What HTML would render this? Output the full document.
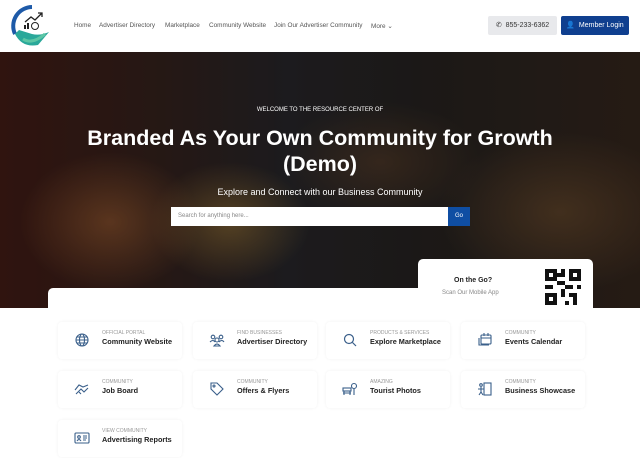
<!DOCTYPE html>
<html><head><meta charset="utf-8"><style>
*{box-sizing:border-box;margin:0;padding:0}
body{width:640px;height:458px;overflow:hidden;background:#fff;font-family:"Liberation Sans",sans-serif;position:relative}
.nav{position:absolute;top:0;left:0;width:640px;height:52px;background:#fff}
.nav a{position:absolute;top:22px;font-size:6.4px;color:#555;text-decoration:none;white-space:nowrap}
.phone{position:absolute;left:488px;top:16px;width:69px;height:19px;background:#e8e9ec;border-radius:2px;font-size:7px;color:#333;text-align:center;line-height:19px}
.login{position:absolute;left:561px;top:16px;width:68px;height:19px;background:#0f3f8f;border-radius:2px;font-size:7px;color:#fff;text-align:center;line-height:19px}
.hero{position:absolute;top:52px;left:0;width:640px;height:256px;overflow:hidden;
background:
radial-gradient(ellipse 90px 70px at 110px 170px,rgba(200,120,60,.55),transparent),
radial-gradient(ellipse 80px 60px at 230px 170px,rgba(210,160,70,.5),transparent),
radial-gradient(ellipse 120px 80px at 560px 160px,rgba(160,110,60,.45),transparent),
radial-gradient(ellipse 100px 60px at 380px 110px,rgba(140,90,50,.4),transparent),
linear-gradient(90deg,#4a1f18 0%,#3a2520 25%,#2b2a2e 45%,#2a2624 65%,#3a2a20 100%)}
.hero:after{content:"";position:absolute;inset:0;background:rgba(0,0,0,.35)}
.h{position:absolute;z-index:2;color:#fff;text-align:center;width:640px;left:0}
.search{position:absolute;z-index:2;left:171px;top:207px;width:277px;height:19px;background:#fff;font-size:6px;color:#888;line-height:19px;padding-left:7px}
.go{position:absolute;z-index:2;left:448px;top:207px;width:22px;height:19px;background:#0f4ea3;color:#fff;font-size:6px;text-align:center;line-height:19px}
.card{position:absolute;left:48px;top:288px;width:545px;height:170px;background:#fff;border-radius:5px}
.qr{position:absolute;z-index:3;left:418px;top:259px;width:175px;height:50px;background:#fff;border-radius:5px}
.tile{position:absolute;width:124px;height:37px;background:#fff;border-radius:4px;box-shadow:0 0 3px rgba(0,0,0,.06)}
.tile svg{position:absolute;left:16px;top:10px}
.tile .s{position:absolute;left:44px;top:8px;font-size:5px;color:#999;text-transform:uppercase}
.tile .t{position:absolute;left:44px;top:15px;font-size:7.3px;color:#222;font-weight:bold;white-space:nowrap}
</style></head><body>
<div class="nav">
<svg style="position:absolute;left:10px;top:4px" width="42" height="44" viewBox="0 0 42 44">
<path d="M22 3A19 19 0 0 0 5 30" stroke="#1e5aa8" stroke-width="4" fill="none"/>
<path d="M5 30Q12 44 28 41L39 28Q30 32 22 30L9 26Z" fill="#2aa89a"/>
<path d="M13 35Q22 41 35 30" stroke="#5cc6a5" stroke-width="3" fill="none"/>
<path d="M15 18l6-5 4 3 7-7M28 9h4v4" stroke="#222" stroke-width="1.3" fill="none"/>
<rect x="14" y="21" width="2" height="4" fill="#222"/><rect x="17" y="19" width="2" height="6" fill="#222"/>
<circle cx="25" cy="22" r="3.5" stroke="#222" fill="none"/>
</svg>
<a style="left:74px">Home</a><a style="left:99px">Advertiser Directory</a><a style="left:165px">Marketplace</a><a style="left:209px">Community Website</a><a style="left:274px">Join Our Advertiser Community</a><a style="left:371px">More ⌄</a>
<div class="phone">✆&nbsp; 855-233-6362</div>
<div class="login">👤&nbsp; Member Login</div>
</div>
<div class="hero">
<div class="h" style="top:55px;font-size:6px">WELCOME TO THE RESOURCE CENTER OF</div>
<div class="h" style="top:73px;font-size:21.5px;font-weight:bold;line-height:26px">Branded As Your Own Community for Growth<br>(Demo)</div>
<div class="h" style="top:135px;font-size:9px">Explore and Connect with our Business Community</div>
</div>
<div class="search">Search for anything here...</div><div class="go">Go</div>
<div class="card"></div>
<div class="qr">
<div style="position:absolute;left:36px;top:18px;font-size:7px;font-weight:bold;color:#222">On the Go?</div>
<div style="position:absolute;left:24px;top:31px;font-size:6px;color:#888">Scan Our Mobile App</div>
<svg style="position:absolute;left:127px;top:10px" width="36" height="36" viewBox="0 0 9 9" shape-rendering="crispEdges">
<path d="M0 0h3v3H0zM6 0h3v3H6zM0 6h3v3H0z" fill="#111"/><path d="M1 1h1v1H1zM7 1h1v1H7zM1 7h1v1H1z" fill="#fff"/>
<path d="M4 0h1v2H4zM3 3h2v1H3zM5 4h2v1H5zM4 5h1v2H4zM6 6h2v1H6zM7 7h1v2H7zM5 8h1v1H5zM0 4h2v1H0zM8 4h1v1H8zM3 1h1v1H3z" fill="#111"/>
</svg>
</div>
<div class="tile" style="left:58px;top:322px"><svg width="16" height="16" viewBox="0 0 16 16" fill="none" stroke="#3a5f8a" stroke-width="1.1"><circle cx="8" cy="8" r="6"/><ellipse cx="8" cy="8" rx="2.5" ry="6"/><path d="M2 8h12M3 5h10M3 11h10"/></svg><div class="s">Official Portal</div><div class="t">Community Website</div></div>
<div class="tile" style="left:193px;top:322px"><svg width="16" height="16" viewBox="0 0 16 16" fill="none" stroke="#3a5f8a" stroke-width="1.1"><circle cx="4" cy="5" r="1.8"/><circle cx="12" cy="5" r="1.8"/><circle cx="8" cy="8" r="2"/><path d="M1 10q3-3 5 0M10 10q3-3 5 0M5 14q3-4 6 0z"/></svg><div class="s">Find Businesses</div><div class="t">Advertiser Directory</div></div>
<div class="tile" style="left:326px;top:322px"><svg width="16" height="16" viewBox="0 0 16 16" fill="none" stroke="#3a5f8a" stroke-width="1.2"><circle cx="7" cy="7" r="4.5"/><path d="M10.5 10.5L14 14"/></svg><div class="s">Products &amp; Services</div><div class="t">Explore Marketplace</div></div>
<div class="tile" style="left:461px;top:322px"><svg width="16" height="16" viewBox="0 0 16 16" fill="none" stroke="#3a5f8a" stroke-width="1.1"><rect x="4" y="3" width="10" height="9" rx="1"/><path d="M2 6v7h10M7 1v3M11 1v3M4 6h10"/></svg><div class="s">Community</div><div class="t">Events Calendar</div></div>
<div class="tile" style="left:58px;top:371px"><svg width="16" height="16" viewBox="0 0 16 16" fill="none" stroke="#3a5f8a" stroke-width="1.1"><path d="M1 9l4-5 4 2 5-2M2 13l5-5 3 3 4-4M5 11l2 2"/></svg><div class="s">Community</div><div class="t">Job Board</div></div>
<div class="tile" style="left:193px;top:371px"><svg width="16" height="16" viewBox="0 0 16 16" fill="none" stroke="#3a5f8a" stroke-width="1.1"><path d="M2 2h6l6 6-6 6-6-6z"/><circle cx="5" cy="5" r="1"/></svg><div class="s">Community</div><div class="t">Offers &amp; Flyers</div></div>
<div class="tile" style="left:326px;top:371px"><svg width="16" height="16" viewBox="0 0 16 16" fill="none" stroke="#3a5f8a" stroke-width="1.1"><rect x="1" y="7" width="8" height="3"/><path d="M2 10v4M8 10v4M1 12h8"/><circle cx="12" cy="5" r="2.5"/><path d="M12 8v6"/></svg><div class="s">Amazing</div><div class="t">Tourist Photos</div></div>
<div class="tile" style="left:461px;top:371px"><svg width="16" height="16" viewBox="0 0 16 16" fill="none" stroke="#3a5f8a" stroke-width="1.1"><rect x="7" y="2" width="7" height="12"/><circle cx="4" cy="4" r="1.3"/><path d="M4 6v5l-2 3M4 11l2 3M1 8h6"/></svg><div class="s">Community</div><div class="t">Business Showcase</div></div>
<div class="tile" style="left:58px;top:420px"><svg width="16" height="16" viewBox="0 0 16 16" fill="none" stroke="#3a5f8a" stroke-width="1.1"><rect x="1" y="3" width="14" height="10" rx="1"/><circle cx="5" cy="7" r="1.3"/><path d="M3 11q2-3 4 0M9 6h4M9 8h4M9 10h3"/></svg><div class="s">View Community</div><div class="t">Advertising Reports</div></div>
</body></html>
